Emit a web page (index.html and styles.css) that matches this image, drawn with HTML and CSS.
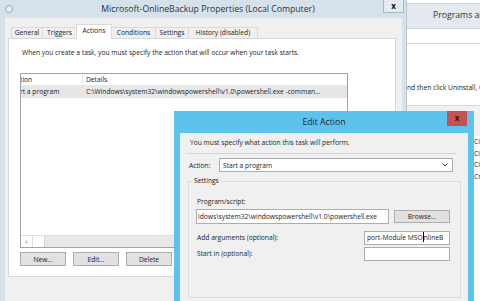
FILE: index.html
```html
<!DOCTYPE html>
<html lang="en">
<head>
    <meta charset="UTF-8">
    <meta name="viewport" content="width=device-width, initial-scale=1.0">
    <link rel="stylesheet" href="styles.css">
    <title>Edit Action</title>
</head>
<body>
    <div class="window programs">
        <div class="programs-title">Programs and Features</div>
        <div class="programs-toolbar"></div>
        <p class="programs-hint">nd then click Uninstall, Change, or Repair.</p>
        <div class="programs-head"></div>
        <ul class="programs-list">
            <li>Citrix Receiver</li>
            <li>Cisco AnyConnect</li>
            <li>Citrix Online Plug-in</li>
            <li>Crystal Reports</li>
        </ul>
    </div>

    <div class="window props">
        <div class="titlebar">
            <span class="app-icon"></span>
            <span class="title">Microsoft-OnlineBackup Properties (Local Computer)</span>
            <span class="close">x</span>
        </div>
        <div class="client">
            <div class="tabs">
                <span class="tab t-general">General</span>
                <span class="tab t-triggers">Triggers</span>
                <span class="tab t-actions active">Actions</span>
                <span class="tab t-conditions">Conditions</span>
                <span class="tab t-settings">Settings</span>
                <span class="tab t-history">History (disabled)</span>
            </div>
            <div class="panel">
                <p class="intro">When you create a task, you must specify the action that will occur when your task starts.</p>
                <div class="list">
                    <div class="list-head">
                        <span class="col-action">tion</span>
                        <span class="col-details">Details</span>
                    </div>
                    <div class="list-row">
                        <span class="col-action">rt a program</span>
                        <span class="col-details">C:\Windows\system32\windowspowershell\v1.0\powershell.exe -comman...</span>
                    </div>
                    <div class="list-space"></div>
                    <div class="hscroll">
                        <span class="hscroll-arrow">&lsaquo;</span>
                        <span class="hscroll-thumb"></span>
                        <span class="hscroll-track"></span>
                    </div>
                </div>
                <div class="list-buttons">
                    <button class="btn">New...</button>
                    <button class="btn">Edit...</button>
                    <button class="btn">Delete</button>
                </div>
            </div>
        </div>
    </div>

    <div class="window dialog">
        <div class="dialog-title">
            <span class="dialog-caption">Edit Action</span>
            <span class="dialog-close">x</span>
        </div>
        <div class="dialog-body">
            <p class="dialog-intro">You must specify what action this task will perform.</p>
            <div class="rule"></div>
            <div class="action-row">
                <span class="action-label">Action:</span>
                <div class="combo">
                    <span>Start a program</span>
                    <svg class="chevron" width="6" height="4" viewBox="0 0 6 4">
                        <path d="M0.5 0.5 L3 3 L5.5 0.5" fill="none" stroke="#444" stroke-width="1"/>
                    </svg>
                </div>
            </div>
            <fieldset class="settings">
                <legend>Settings</legend>
                <div class="field-label">Program/script:</div>
                <div class="program-row">
                    <div class="input wide">idows\system32\windowspowershell\v1.0\powershell.exe</div>
                    <button class="btn browse">Browse...</button>
                </div>
                <div class="arg-row first">
                    <span class="field-label">Add arguments (optional):</span>
                    <div class="input short">port-Module MSO<span class="caret"></span>nlineB</div>
                </div>
                <div class="arg-row">
                    <span class="field-label">Start in (optional):</span>
                    <div class="input short"></div>
                </div>
            </fieldset>
        </div>
    </div>
</body>
</html>
```

FILE: styles.css
```css
/* desktop */
body {
    margin: 0;
    width: 480px;
    height: 301px;
    overflow: hidden;
    position: relative;
    background-color: #d6e2eb;
    font-family: "Open Sans", "Noto Sans", sans-serif;
    font-size: 6.7px;
    color: #222;
}

p {
    margin: 0;
}

.window {
    position: absolute;
    box-sizing: border-box;
}

/* window in the back, right */
.programs {
    left: 407px;
    top: 0;
    width: 73px;
    height: 301px;
    overflow: hidden;
    background-color: #fff;
}

.programs-title {
    height: 24px;
    margin-top: 3px;
    padding-left: 26px;
    line-height: 22px;
    font-size: 8.7px;
    color: #333;
    white-space: nowrap;
    background-color: #e3e9ee;
    border-top: 1px solid #c9d3da;
    border-bottom: 1px solid #c9d3da;
}

.programs-toolbar {
    height: 14px;
    border-bottom: 1px solid #d0d0d0;
}

.programs-hint {
    margin-top: 39px;
    line-height: 10px;
    white-space: nowrap;
}

.programs-head {
    height: 30px;
    margin-top: 12px;
    background-color: #f1f1f1;
    border-top: 1px solid #dadada;
}

.programs-list {
    list-style: none;
    margin: 0;
    padding: 0 0 0 67px;
}

.programs-list li {
    line-height: 11.7px;
    white-space: nowrap;
}

/* task properties window */
.props {
    left: 0;
    top: 0;
    width: 407px;
    height: 301px;
    padding: 0 4px 0 5px;
    background-color: #d6e2eb;
    border-right: 1px solid #b9c7d2;
    display: flex;
    flex-direction: column;
}

.titlebar {
    height: 18px;
    display: flex;
    align-items: flex-start;
    margin-left: -5px;
    padding-left: 5px;
}

.app-icon {
    width: 6px;
    height: 6px;
    margin-top: 5px;
    border: 1px solid #9aa7b1;
    border-radius: 50%;
    background-color: #e9eef2;
}

.title {
    flex: 1;
    padding-left: 20px;
    text-align: center;
    line-height: 18px;
    font-size: 8.7px;
    color: #333;
    white-space: nowrap;
}

.close {
    width: 21px;
    height: 13px;
    line-height: 11px;
    text-align: center;
    font-size: 8px;
    font-weight: bold;
    color: #111;
    background-color: #e4ebf0;
    border: 1px solid #a7b5c0;
    border-top: 0;
    box-sizing: border-box;
    margin-right: -2px;
}

.client {
    flex: 1;
    background-color: #f0f0f0;
    padding: 6px 6px 0 3px;
}

.tabs {
    display: flex;
    align-items: flex-end;
    height: 14px;
    margin-left: 3px;
    position: relative;
    z-index: 1;
}

.tab {
    box-sizing: border-box;
    height: 11px;
    line-height: 10px;
    text-align: center;
    white-space: nowrap;
    background-color: #f0f0f0;
    border: 1px solid #d9d9d9;
    border-bottom: 0;
    border-left: 0;
}

.t-general { width: 32px; border-left: 1px solid #d9d9d9; }
.t-triggers { width: 34px; }
.t-actions { width: 35px; }
.t-conditions { width: 44px; }
.t-settings { width: 33px; }
.t-history { width: 69px; }

.tab.active {
    height: 15px;
    margin-bottom: -1px;
    line-height: 12px;
    background-color: #fff;
    border-left: 1px solid #d9d9d9;
    margin-left: -1px;
    width: 36px;
}

.panel {
    height: 239px;
    box-sizing: border-box;
    background-color: #fff;
    border: 1px solid #d9d9d9;
    padding: 0 0 0 11px;
}

.intro {
    margin: 9px 0 0 2px;
    line-height: 10px;
    white-space: nowrap;
}

.list {
    width: 328px;
    height: 175px;
    margin-top: 15px;
    box-sizing: border-box;
    border: 1px solid #9fa4aa;
    display: flex;
    flex-direction: column;
    overflow: hidden;
}

.list-head,
.list-row {
    display: flex;
    white-space: nowrap;
}

.list-head {
    height: 11px;
    line-height: 11px;
}

.list-row {
    height: 13px;
    line-height: 13px;
    background-color: #e7e7e7;
}

.col-action {
    width: 62px;
    overflow: hidden;
    text-indent: -1px;
}

.list-head .col-action {
    border-right: 1px solid #e3e3e3;
    width: 61px;
}

.col-details {
    padding-left: 3px;
}

.list-space {
    flex: 1;
}

.hscroll {
    height: 11px;
    display: flex;
    border-top: 1px solid #e0e0e0;
}

.hscroll-arrow {
    width: 11px;
    line-height: 9px;
    text-align: center;
    font-size: 8px;
    color: #606060;
    background-color: #fff;
    border-right: 1px solid #e0e0e0;
}

.hscroll-thumb {
    width: 11px;
    background-color: #fff;
    border-right: 1px solid #d0d0d0;
}

.hscroll-track {
    flex: 1;
    background-color: #e8e8e8;
}

.list-buttons {
    display: flex;
    gap: 7px;
    margin-top: 4px;
}

.btn {
    width: 46px;
    height: 14px;
    padding: 0;
    font-family: inherit;
    font-size: 6.7px;
    color: #222;
    background-color: #e1e1e1;
    border: 1px solid #adadad;
}

/* edit action dialog */
.dialog {
    left: 174px;
    top: 111px;
    width: 300px;
    height: 200px;
    padding: 0 6px;
    background-color: #5cc4ec;
    display: flex;
    flex-direction: column;
    z-index: 2;
}

.dialog-title {
    height: 22px;
    display: flex;
    justify-content: center;
    position: relative;
}

.dialog-caption {
    line-height: 22px;
    font-size: 8.7px;
    color: #1e2a33;
}

.dialog-close {
    position: absolute;
    top: 0;
    right: 1px;
    width: 20px;
    height: 15px;
    line-height: 14px;
    text-align: center;
    font-size: 8px;
    font-weight: bold;
    color: #1a1a1a;
    background-color: #c75050;
}

.dialog-body {
    flex: 1;
    background-color: #f0f0f0;
    padding: 5px 7px 0 8px;
}

.dialog-intro {
    margin-left: 2px;
    line-height: 10px;
    white-space: nowrap;
}

.rule {
    height: 1px;
    margin: 5px 4px 0 -1px;
    background-color: #d5d5d5;
}

.action-row {
    display: flex;
    align-items: center;
    margin: 4px 8px 0 1px;
}

.action-label {
    width: 30px;
}

.combo {
    flex: 1;
    height: 14px;
    box-sizing: border-box;
    display: flex;
    align-items: center;
    justify-content: space-between;
    padding: 0 4px 0 3px;
    background-color: #fff;
    border: 1px solid #abadb3;
}

.settings {
    margin: 4px 0 0 0;
    padding: 0 10px 0 7px;
    border: 1px solid #dcdcdc;
    height: 120px;
}

.settings legend {
    padding: 0 2px;
    margin-left: -4px;
    line-height: 10px;
}

.field-label {
    line-height: 10px;
    white-space: nowrap;
}

.settings > .field-label {
    margin-top: 11px;
    margin-left: 1px;
}

.program-row {
    display: flex;
    align-items: center;
    gap: 5px;
    margin-top: 2px;
}

.input {
    height: 15px;
    box-sizing: border-box;
    line-height: 13px;
    padding-left: 1px;
    white-space: nowrap;
    overflow: hidden;
    background-color: #fff;
    border: 1px solid #abadb3;
}

.input.wide {
    flex: 1;
}

.btn.browse {
    width: 56px;
    height: 13px;
}

.arg-row {
    display: flex;
    align-items: center;
    justify-content: space-between;
    margin-top: 2px;
}

.arg-row.first {
    margin-top: 7px;
}

.arg-row .field-label {
    margin-left: 1px;
}

.input.short {
    width: 86px;
    height: 14px;
    line-height: 12px;
    padding-left: 2px;
}

.caret {
    display: inline-block;
    width: 1px;
    height: 10px;
    vertical-align: -2px;
    background-color: #000;
}
```
